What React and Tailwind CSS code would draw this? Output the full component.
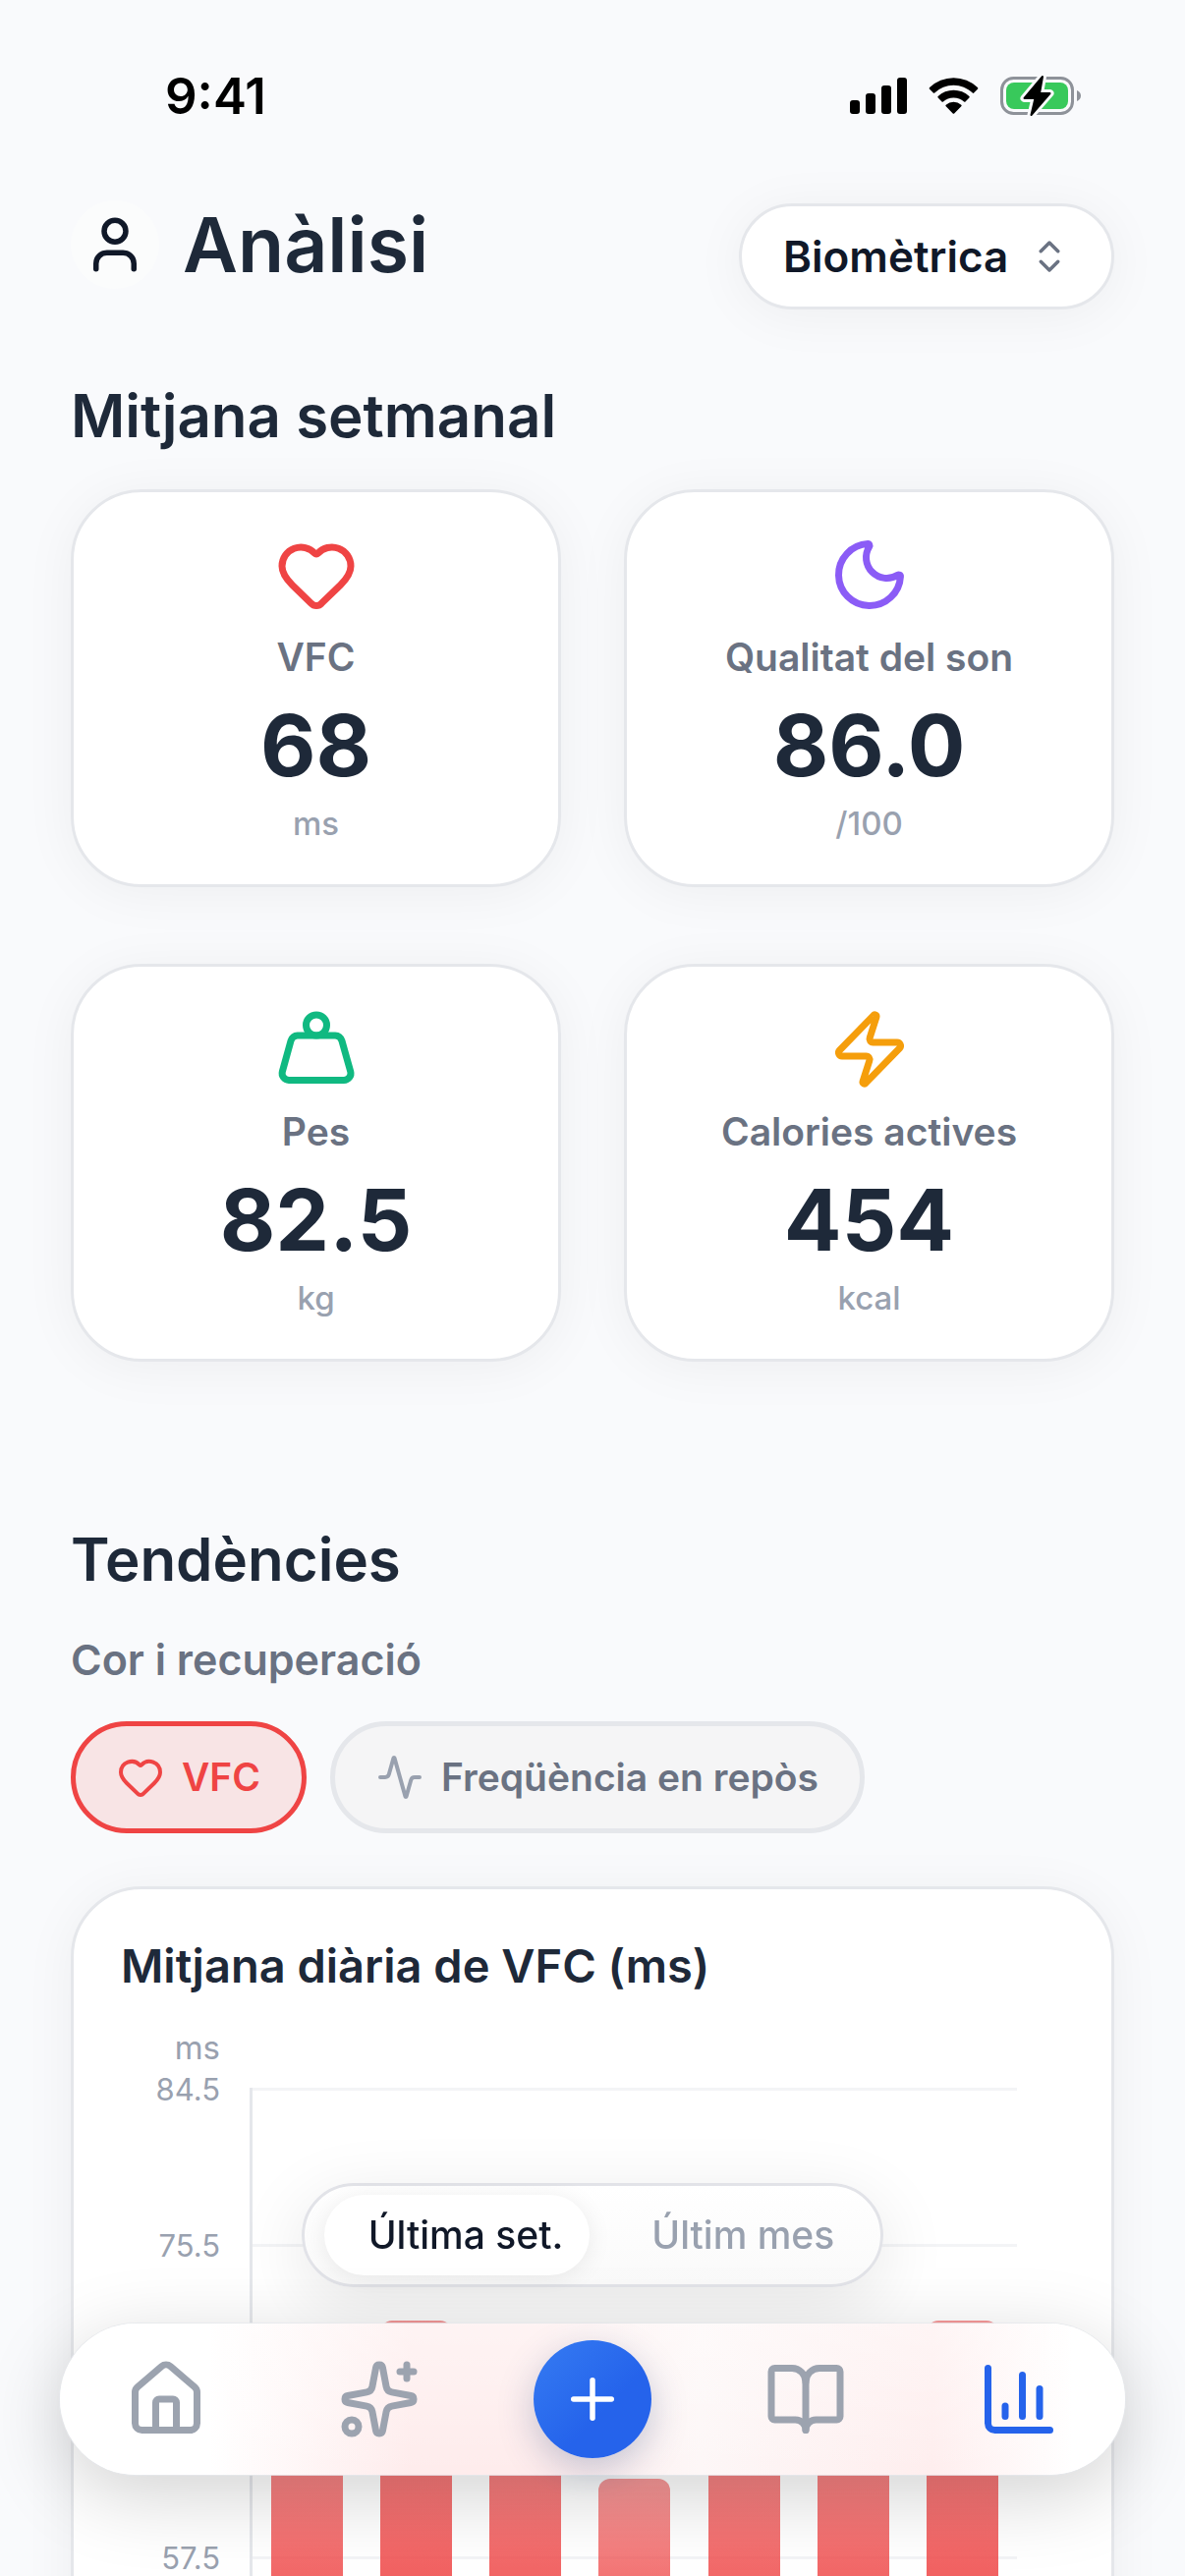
import { useState } from 'react';
import {
  Activity,
  BookOpen,
  ChartColumn,
  ChevronsUpDown,
  Heart,
  House,
  Moon,
  Plus,
  Sparkles,
  User,
  Weight,
  Zap,
} from 'lucide-react';

const stats = [
  { id: 'hrv', label: 'VFC', value: '68', unit: 'ms', icon: Heart, color: 'text-[#ef4444]' },
  { id: 'sleep', label: 'Qualitat del son', value: '86.0', unit: '/100', icon: Moon, color: 'text-[#8b5cf6]' },
  { id: 'weight', label: 'Pes', value: '82.5', unit: 'kg', icon: Weight, color: 'text-[#10b981]' },
  { id: 'calories', label: 'Calories actives', value: '454', unit: 'kcal', icon: Zap, color: 'text-[#f59e0b]' },
];

const metrics = [
  { id: 'hrv', label: 'VFC', icon: Heart },
  { id: 'resting', label: 'Freqüència en repòs', icon: Activity },
];

const periods = [
  { id: 'week', label: 'Última set.' },
  { id: 'month', label: 'Últim mes' },
];

// Chart axis: four bands of nine units, from AXIS_MIN up to the first tick
const ticks = ['84.5', '75.5', '66.5', '57.5'];
const AXIS_MIN = 48.5;
const AXIS_MAX = 84.5;
const dailyValues = [67, 71.1, 68.5, 62, 67, 67.5, 71.1];

const StatusBar = () => (
  <div className="flex h-[156px] items-center justify-between pt-[39px] pl-[168px] pr-[106px]">
    <span className="text-[51px] leading-none font-semibold text-black">9:41</span>
    <div className="flex items-center gap-[22px]">
      <svg width="58" height="37" viewBox="0 0 58 37" aria-hidden="true">
        <rect x="0" y="23" width="10" height="14" rx="3" />
        <rect x="16" y="16" width="10" height="21" rx="3" />
        <rect x="32" y="8" width="10" height="29" rx="3" />
        <rect x="48" y="0" width="10" height="37" rx="3" />
      </svg>
      <svg width="51" height="37" viewBox="0.3 0.1 16.4 11.9" aria-hidden="true">
        <path d="M8.5 2.6c2.3 0 4.5.9 6.2 2.5a.3.3 0 0 0 .45 0l1.2-1.25a.35.35 0 0 0 0-.5 11.3 11.3 0 0 0-15.7 0 .35.35 0 0 0 0 .5l1.2 1.25c.12.12.32.12.45 0A9 9 0 0 1 8.5 2.6z" />
        <path d="M8.5 6.7c1.26 0 2.48.47 3.4 1.3.13.12.33.12.46 0l1.25-1.27a.35.35 0 0 0 0-.5 7.4 7.4 0 0 0-10.2 0 .35.35 0 0 0 0 .5L4.65 8c.13.12.33.12.46 0a5 5 0 0 1 3.39-1.3z" />
        <path d="M11 9.5a.33.33 0 0 0 0-.5 3.8 3.8 0 0 0-5 0 .33.33 0 0 0 0 .5l2.25 2.3c.13.13.34.13.47 0z" />
      </svg>
      <svg width="82" height="39" viewBox="0 0 82 39" className="overflow-visible" aria-hidden="true">
        <rect x="1.5" y="1.5" width="72" height="36" rx="12" fill="none" stroke="#8e9299" strokeWidth="3" />
        <path d="M78 14v11c2.6-1 4-3 4-5.500s-1.400-4.500-4-5.500z" fill="#8e9299" />
        <rect x="6" y="6" width="63" height="27" rx="8" fill="#38c95b" />
        <path
          d="M43 0 24.500 22h11L31.500 39 50.500 17h-10.500z"
          fill="#000"
          stroke="#f9fafc"
          strokeWidth="8"
          strokeLinejoin="round"
          paintOrder="stroke"
        />
        <path d="M43 0 24.500 22h11L31.500 39 50.500 17h-10.500z" stroke="#000" strokeWidth="2" strokeLinejoin="round" />
      </svg>
    </div>
  </div>
);

const StatCard = ({ label, value, unit, icon: Icon, color }) => (
  <article className="flex flex-col items-center rounded-[72px] border-[3px] border-gray-200 bg-white py-[42px] shadow-[0_6px_54px_rgba(0,0,0,0.05)]">
    <Icon size={84} className={color} />
    <h3 className="mt-[18px] text-[39px] leading-[48px] font-semibold text-gray-500">{label}</h3>
    <p className="mt-[18px] text-[87px] leading-[96px] font-bold text-gray-800">{value}</p>
    <p className="mt-[11px] text-[33px] leading-[40px] font-medium text-gray-400">{unit}</p>
  </article>
);

const BarChart = () => (
  <div className="mt-[21px] flex gap-[30px]">
    <div className="-mt-4 w-[101px] text-right text-[31px] leading-9 text-gray-400">
      {ticks.map((tick) => (
        <div key={tick} className="h-[159px]">
          {tick}
        </div>
      ))}
    </div>
    <div className="relative mr-12 flex-1 border-l-[3px] border-gray-200">
      {ticks.map((tick) => (
        <div key={tick} className="h-[159px] border-t-[3px] border-gray-100" />
      ))}
      <div className="absolute inset-0 flex items-end">
        {dailyValues.map((value, index) => (
          <div key={index} className="flex h-full flex-1 items-end justify-center">
            <div
              className="w-[73px] rounded-t-xl bg-linear-to-b from-[#ef4444]/55 to-[#ef4444]"
              style={{ height: `${((value - AXIS_MIN) / (AXIS_MAX - AXIS_MIN)) * 100}%` }}
            />
          </div>
        ))}
      </div>
    </div>
  </div>
);

const PeriodToggle = () => {
  const [period, setPeriod] = useState('week');

  return (
    <div className="flex gap-[18px] rounded-full border-[3px] border-[#e2e3e8] bg-linear-to-b from-white to-[#fafafa] px-5 py-[9px] shadow-[0_18px_72px_rgba(0,0,0,0.1)]">
      {periods.map(({ id, label }) => (
        <button
          key={id}
          type="button"
          onClick={() => setPeriod(id)}
          aria-pressed={period === id}
          className={`rounded-full py-[17px] pl-[45px] pr-[27px] text-[39px] leading-[48px] font-medium ${
            period === id ? 'bg-white text-gray-900 shadow-[0_3px_24px_rgba(0,0,0,0.08)]' : 'text-gray-400'
          }`}
        >
          {label}
        </button>
      ))}
    </div>
  );
};

const navItem = 'flex flex-1 items-center justify-center text-[#9ca3af]';

const TabBar = () => (
  <nav className="flex w-full items-center rounded-full bg-[linear-gradient(180deg,rgba(255,255,255,0.4),rgba(255,255,255,0)),linear-gradient(90deg,#fff_14%,#feecec_33%,#feecec_46%,#fdf7f7_60%,#feeeee_82%,#fff_95%)] py-[17px] shadow-[0_20px_80px_rgba(0,0,0,0.18)] ring-1 ring-gray-200/80">
    <a href="#inici" aria-label="Inici" className={navItem}>
      <House size={84} />
    </a>
    <a href="#assistent" aria-label="Assistent" className={navItem}>
      <Sparkles size={84} />
    </a>
    <div className="flex flex-1 justify-center">
      <button
        type="button"
        aria-label="Afegir"
        className="flex size-[120px] items-center justify-center rounded-full bg-linear-to-br from-[#367bf2] to-[#2563eb] to-60% text-white shadow-[0_12px_36px_rgba(30,64,120,0.25)]"
      >
        <Plus size={66} />
      </button>
    </div>
    <a href="#diari" aria-label="Diari" className={navItem}>
      <BookOpen size={84} />
    </a>
    <a href="#analisi" aria-label="Anàlisi" aria-current="page" className="flex flex-1 items-center justify-center text-[#2563eb]">
      <ChartColumn size={84} />
    </a>
  </nav>
);

const App = () => {
  const [metric, setMetric] = useState('hrv');

  return (
    <div className="h-screen overflow-x-hidden overflow-y-auto bg-[#f9fafc] font-['Inter','Liberation_Sans',sans-serif] [scrollbar-width:none]">
      <StatusBar />

      <main className="px-[72px] pt-12 pb-[320px]">
        <header className="flex items-start justify-between">
          <div className="flex items-center gap-6">
            <button
              type="button"
              aria-label="Perfil"
              className="flex size-[90px] items-center justify-center rounded-full bg-[#fbfcfc] text-gray-900"
            >
              <User size={66} />
            </button>
            <h1 className="text-[77px] leading-[90px] font-semibold text-gray-800">Anàlisi</h1>
          </div>
          <div className="relative mt-[3px]">
            <select
              aria-label="Categoria"
              className="h-[108px] appearance-none rounded-full border-[3px] border-gray-200 bg-white pl-[42px] pr-[104px] text-[44px] font-semibold text-gray-900 shadow-[0_6px_54px_rgba(0,0,0,0.05)]"
            >
              <option>Biomètrica</option>
            </select>
            <ChevronsUpDown
              size={42}
              className="pointer-events-none absolute top-1/2 right-[45px] -translate-y-1/2 text-gray-500"
            />
          </div>
        </header>

        <h2 className="mt-[72px] text-[60px] leading-[72px] font-semibold text-gray-800">Mitjana setmanal</h2>
        <section className="mt-[39px] grid grid-cols-2 gap-x-16 gap-y-[78px]">
          {stats.map((stat) => (
            <StatCard key={stat.id} {...stat} />
          ))}
        </section>

        <h2 className="mt-[165px] text-[60px] leading-[72px] font-semibold text-gray-800">Tendències</h2>
        <h3 className="mt-[39px] text-[43px] leading-[54px] font-semibold text-gray-500">Cor i recuperació</h3>
        <div className="mt-9 flex gap-6">
          {metrics.map(({ id, label, icon: Icon }) => (
            <button
              key={id}
              type="button"
              onClick={() => setMetric(id)}
              aria-pressed={metric === id}
              className={`flex items-center gap-[18px] rounded-full border-[5px] px-[42px] py-7 text-[39px] leading-[48px] font-semibold ${
                metric === id ? 'border-[#ef4444] bg-[#f8e4e5] text-[#ef4444]' : 'border-gray-200 bg-[#f5f5f6] text-gray-500'
              }`}
            >
              <Icon size={48} className={metric === id ? 'text-[#ef4444]' : 'text-gray-400'} />
              {label}
            </button>
          ))}
        </div>

        <section className="mt-[54px] rounded-[72px] border-[3px] border-gray-200 bg-white p-12 shadow-[0_6px_54px_rgba(0,0,0,0.05)]">
          <h3 className="text-[47px] leading-[60px] font-semibold text-gray-800">Mitjana diària de VFC (ms)</h3>
          <p className="mt-[33px] w-[101px] text-right text-[33px] leading-[40px] text-gray-400">ms</p>
          <BarChart />
        </section>
      </main>

      <div className="fixed inset-x-0 bottom-[103px] flex flex-col items-center gap-[37px] px-[61px]">
        <PeriodToggle />
        <TabBar />
      </div>
    </div>
  );
};

export default App;
